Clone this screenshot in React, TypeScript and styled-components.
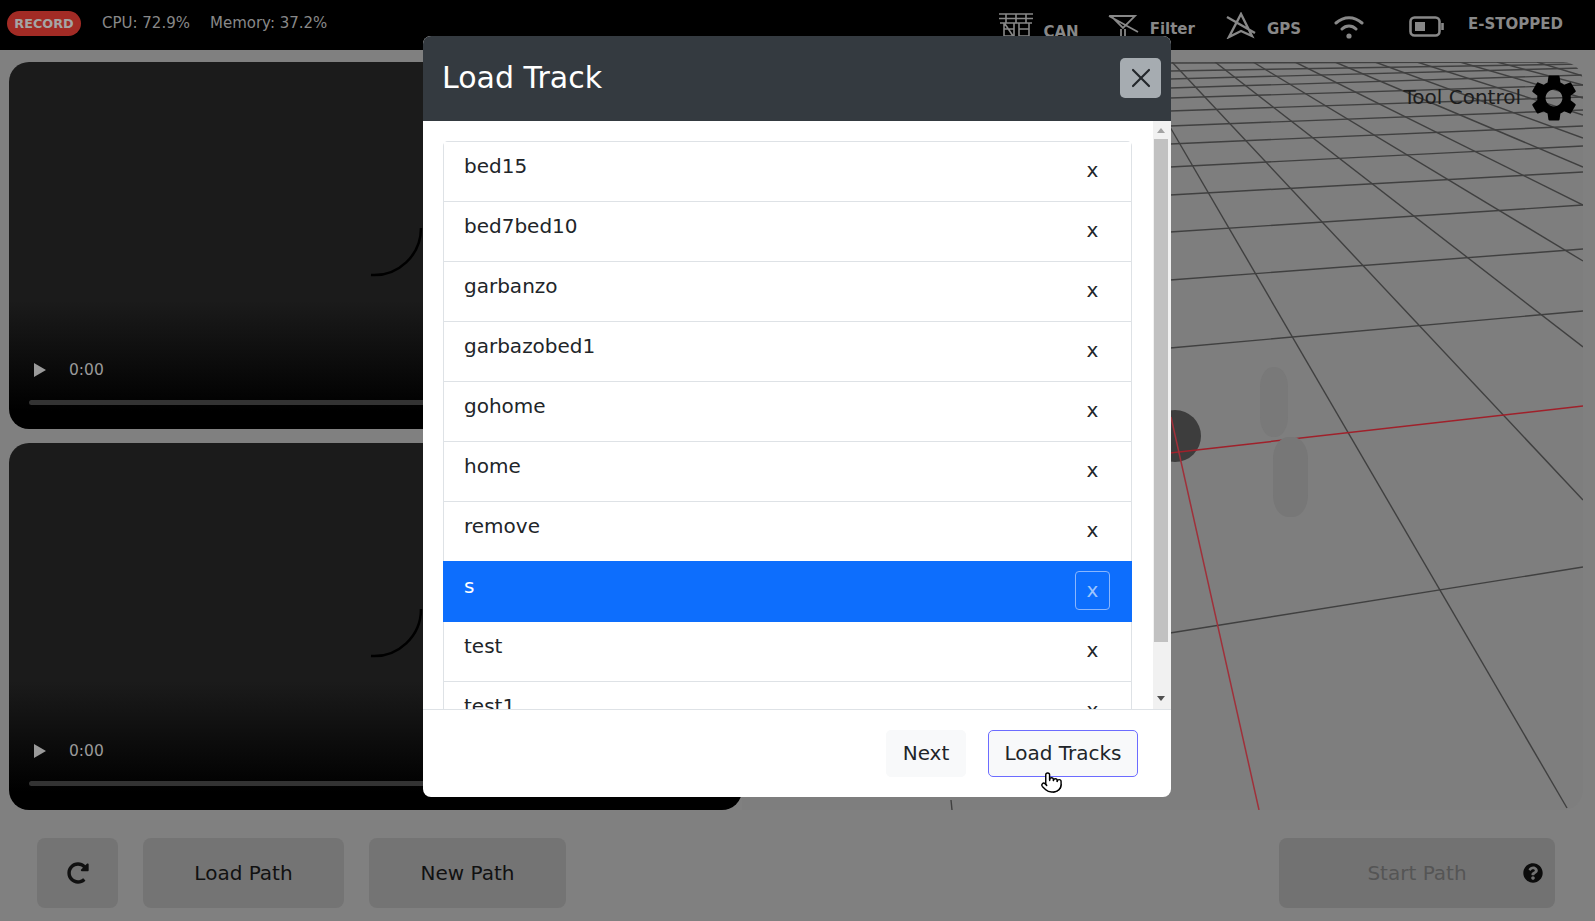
import styled, { createGlobalStyle } from 'styled-components';
import { MdSettings } from 'react-icons/md';
import { FaRedoAlt, FaQuestionCircle } from 'react-icons/fa';
import { X, Pointer } from 'lucide-react';

const GlobalStyle = createGlobalStyle`
  html, body {
    margin: 0;
    padding: 0;
    background: #808080;
    font-family: "DejaVu Sans", sans-serif;
  }
  * {
    box-sizing: border-box;
  }
`;

// Styled Components
const Page = styled.div`
  position: relative;
  width: 1595px;
  height: 921px;
  overflow: hidden;
  display: flex;
  flex-direction: column;
`;

const TopBar = styled.div`
  height: 50px;
  flex-shrink: 0;
  background: #000;
  display: flex;
  justify-content: space-between;
  align-items: center;
  padding: 0 32px 0 7px;
  color: #888;
`;

const TopGroup = styled.div`
  display: flex;
  align-items: center;
`;

const RecordPill = styled.div`
  width: 74px;
  height: 25px;
  margin: -3px 21px 0 0;
  border-radius: 13px;
  background: #a22b25;
  color: #a5a5a5;
  font-size: 12.8px;
  font-weight: 700;
  display: flex;
  align-items: center;
  justify-content: center;
`;

const Stat = styled.span<{ $gap: number }>`
  font-size: 15px;
  margin: -4px ${(p) => p.$gap}px 0 0;
`;

const StatusIcon = styled.svg<{ $gap: number; $w: number; $h: number; $top: number }>`
  width: ${(p) => p.$w}px;
  height: ${(p) => p.$h}px;
  margin: ${(p) => p.$top}px ${(p) => p.$gap}px 0 0;
  flex-shrink: 0;
  fill: none;
  stroke: #888;
`;

const StatusLabel = styled.span<{ $gap: number; $top: number }>`
  font-size: 15px;
  font-weight: 700;
  margin: ${(p) => p.$top}px ${(p) => p.$gap}px 0 0;
`;

const Main = styled.div`
  height: 760px;
  flex-shrink: 0;
  display: flex;
  padding: 12px 12px 0 9px;
`;

const VideoColumn = styled.div`
  width: 733px;
  flex-shrink: 0;
  display: flex;
  flex-direction: column;
  gap: 14px;
`;

const Video = styled.div`
  position: relative;
  height: 367px;
  border-radius: 20px;
  background: linear-gradient(#1b1b1b 0, #1b1b1b 65%, #000 95%);
`;

const Spinner = styled.svg`
  position: absolute;
  left: 350px;
  top: 150px;
  width: 70px;
  height: 70px;
  fill: none;
  stroke: #000;
  stroke-width: 2.5px;
`;

const VideoControls = styled.div`
  position: absolute;
  left: 25px;
  top: 299px;
  display: flex;
  align-items: center;
  gap: 23px;
  color: #9a9a9a;
  font-size: 15.5px;
`;

const PlayGlyph = styled.div`
  width: 0;
  height: 0;
  border-left: 12px solid #9a9a9a;
  border-top: 7px solid transparent;
  border-bottom: 7px solid transparent;
`;

const VideoTrack = styled.div`
  position: absolute;
  left: 20px;
  right: 20px;
  top: 338px;
  height: 5px;
  border-radius: 3px;
  background: #333;
`;

const Scene = styled.div`
  position: relative;
  flex: 1;
  height: 748px;
  border-radius: 0 20px 20px 0;
  overflow: hidden;
  background: #7e7e7e;
`;

const SceneDrawing = styled.svg`
  display: block;
  width: 841px;
  height: 748px;
`;

const ToolControl = styled.div`
  position: absolute;
  right: 1px;
  top: 8px;
  display: flex;
  align-items: center;
  gap: 5px;
  color: #1c1c1c;
`;

const ToolLabel = styled.span`
  font-size: 20px;
  margin-bottom: 2px;
`;

const BottomBar = styled.div`
  flex: 1;
  display: flex;
  align-items: flex-start;
  gap: 25px;
  padding: 28px 40px 0 37px;
`;

const ActionButton = styled.div<{ $w: number }>`
  width: ${(p) => p.$w}px;
  height: 70px;
  border-radius: 8px;
  background: #747474;
  color: #111;
  font-size: 20px;
  display: flex;
  align-items: center;
  justify-content: center;
`;

const StartButton = styled(ActionButton)`
  position: relative;
  margin-left: auto;
  background: #727272;
  color: #555;
`;

const HelpIcon = styled.div`
  position: absolute;
  right: 12px;
  top: 25px;
  display: flex;
  color: #0c0c0c;
`;

const Modal = styled.div`
  position: absolute;
  left: 423px;
  top: 36px;
  width: 748px;
  height: 761px;
  border-radius: 8px;
  overflow: hidden;
  background: #fff;
  display: flex;
  flex-direction: column;
`;

const ModalHeader = styled.div`
  height: 85px;
  flex-shrink: 0;
  background: #343a40;
  display: flex;
  align-items: center;
  justify-content: space-between;
  padding: 0 10px 2px 19px;
`;

const ModalTitle = styled.h2`
  margin: 0;
  font-size: 30px;
  font-weight: 400;
  color: #fff;
`;

const CloseButton = styled.button`
  width: 41px;
  height: 40px;
  padding: 0;
  border: 0;
  border-radius: 5px;
  background: #a6acb1;
  color: #23272b;
  display: flex;
  align-items: center;
  justify-content: center;
`;

const ModalBody = styled.div`
  height: 588px;
  flex-shrink: 0;
  display: flex;
`;

const ListViewport = styled.div`
  flex: 1;
  overflow: hidden;
  padding: 20px 21px 0 20px;
`;

const TrackList = styled.ul`
  list-style: none;
  margin: 0;
  padding: 0;
  border: 1px solid #dee2e6;
  border-bottom: 0;
  border-radius: 5px 5px 0 0;
`;

const TrackRow = styled.li<{ $active?: boolean }>`
  height: ${(p) => (p.$active ? 61 : 60)}px;
  margin: ${(p) => (p.$active ? '-1px -1px 0' : '0')};
  padding: ${(p) => (p.$active ? '10px 22px 0 21px' : '9px 21px 0 20px')};
  border-bottom: ${(p) => (p.$active ? '0' : '1px solid #dee2e6')};
  background: ${(p) => (p.$active ? '#0d6efd' : '#fff')};
  color: ${(p) => (p.$active ? '#fff' : '#212529')};
  display: flex;
  justify-content: space-between;
  font-size: 20px;
  line-height: 30px;
`;

const RemoveButton = styled.div<{ $active?: boolean }>`
  width: 35px;
  height: 39px;
  padding-bottom: 2px;
  border-radius: 4px;
  border: 1px solid ${(p) => (p.$active ? '#8ab6fe' : 'transparent')};
  color: ${(p) => (p.$active ? '#9ec5fe' : '#212529')};
  font-size: 20px;
  display: flex;
  align-items: center;
  justify-content: center;
`;

const ScrollTrack = styled.div`
  width: 18px;
  flex-shrink: 0;
  padding-right: 2px;
  background: #f1f1f1;
  display: flex;
  flex-direction: column;
  align-items: center;
`;

const ScrollUp = styled.div`
  width: 0;
  height: 0;
  margin: 7px 0 6px;
  border-left: 4px solid transparent;
  border-right: 4px solid transparent;
  border-bottom: 5px solid #a3a3a3;
`;

const ScrollThumb = styled.div`
  width: 14px;
  height: 503px;
  background: #c1c1c1;
`;

const ScrollDown = styled.div`
  width: 0;
  height: 0;
  margin-top: auto;
  margin-bottom: 8px;
  border-left: 4px solid transparent;
  border-right: 4px solid transparent;
  border-top: 5px solid #505050;
`;

const ModalFooter = styled.div`
  flex: 1;
  border-top: 1px solid #dee2e6;
  display: flex;
  justify-content: flex-end;
  align-items: flex-start;
  gap: 22px;
  padding: 20px 33px 0 0;
`;

const FooterButton = styled.button<{ $focused?: boolean }>`
  height: 47px;
  width: ${(p) => (p.$focused ? 150 : 80)}px;
  padding: 0 0 2px;
  border: 1px solid ${(p) => (p.$focused ? '#6c6cff' : '#f8f9fa')};
  border-radius: 5px;
  background: #f8f9fa;
  color: #212529;
  font-family: inherit;
  font-size: 20px;
`;

const Cursor = styled.div`
  position: absolute;
  left: 1040px;
  top: 771px;
  display: flex;
`;

const tracks = ['bed15', 'bed7bed10', 'garbanzo', 'garbazobed1', 'gohome', 'home', 'remove', 's', 'test', 'test1'];

// page coordinates of the floor grid, the svg viewBox is offset to match them
const crossLines = [
  [1170, 232, 1583, 205], [1170, 195, 1583, 172], [1170, 167, 1583, 146], [1170, 144, 1583, 126],
  [1170, 126, 1583, 110], [1170, 111, 1583, 97], [1170, 98, 1583, 85], [1170, 88, 1583, 75],
  [1170, 79, 1583, 68], [1170, 71, 1583, 64], [1170, 63, 1583, 62],
  [1170, 280, 1583, 249], [1170, 348, 1583, 311], [1170, 633, 1583, 567],
];

const depthLines = [
  [1172, 62, 1583, 500], [1170, 127, 1567, 808], [1215, 62, 1583, 347], [1253, 62, 1583, 261],
  [1295, 62, 1583, 205], [1335, 62, 1583, 167], [1375, 62, 1583, 138], [1417, 62, 1583, 115],
  [1460, 62, 1583, 98], [1497, 62, 1583, 85], [1537, 62, 1583, 76],
];

const App = () => {
  return (
    <Page>
      <GlobalStyle />
      <TopBar>
        <TopGroup>
          <RecordPill>RECORD</RecordPill>
          <Stat $gap={20}>CPU: 72.9%</Stat>
          <Stat $gap={0}>Memory: 37.2%</Stat>
        </TopGroup>
        <TopGroup>
          <StatusIcon $w={34} $h={26} $top={-1} $gap={10} viewBox="0 0 34 26" strokeWidth="1.6">
            <path d="M0 2h34M0 6.5h34M1 11h32M7 2v9M27 2v9M17 2v9M5 11v14M15 11v14M20 11v14M30 11v14M5 17h10M20 17h10M5 24h10M20 24h10M6 12l8 12" />
          </StatusIcon>
          <StatusLabel $gap={29} $top={14}>CAN</StatusLabel>
          <StatusIcon $w={31} $h={27} $top={2} $gap={11} viewBox="0 0 31 27" strokeWidth="1.8">
            <path d="M3 3h24L15 15zM13 16v8c0 2 4 2 4 0v-8M1 3l29 16" />
          </StatusIcon>
          <StatusLabel $gap={31} $top={7}>Filter</StatusLabel>
          <StatusIcon $w={30} $h={27} $top={0} $gap={11} viewBox="0 0 30 27" strokeWidth="2.4">
            <path d="M15 2l11 22-11-5L3 25zM1 5l28 16" />
          </StatusIcon>
          <StatusLabel $gap={33} $top={7}>GPS</StatusLabel>
          <StatusIcon $w={30} $h={24} $top={4} $gap={45} viewBox="0 0 30 24" strokeWidth="3" strokeLinecap="round">
            <path d="M2 8c8-7 18-7 26 0M8 14c4-4 10-4 14 0" />
            <circle cx="15" cy="21" r="2.6" fill="#888" stroke="none" />
          </StatusIcon>
          <StatusIcon $w={35} $h={21} $top={3} $gap={24} viewBox="0 0 35 21" strokeWidth="2.6">
            <rect x="1.5" y="1.5" width="29" height="18" rx="4" />
            <rect x="6" y="6" width="10" height="9" fill="#888" stroke="none" />
            <path d="M33.5 7v7" />
          </StatusIcon>
          <StatusLabel $gap={0} $top={-2}>E-STOPPED</StatusLabel>
        </TopGroup>
      </TopBar>

      <Main>
        <VideoColumn>
          {[0, 1].map((id) => (
            <Video key={id}>
              <Spinner viewBox="0 0 70 70">
                <path d="M62 16a47 47 0 0 1-50 47" />
              </Spinner>
              <VideoControls>
                <PlayGlyph />
                <span>0:00</span>
              </VideoControls>
              <VideoTrack />
            </Video>
          ))}
        </VideoColumn>
        <Scene>
          <SceneDrawing viewBox="742 62 841 748">
            {crossLines.map(([x1, y1, x2, y2], i) => (
              <line key={i} x1={x1} y1={y1} x2={x2} y2={y2} stroke="#404040" strokeWidth="1.4" />
            ))}
            {depthLines.map(([x1, y1, x2, y2], i) => (
              <line key={i} x1={x1} y1={y1} x2={x2} y2={y2} stroke="#404040" strokeWidth="1.4" />
            ))}
            <line x1="951" y1="800" x2="952" y2="810" stroke="#404040" strokeWidth="1.4" />
            <circle cx="1175" cy="436" r="26" fill="#3d3d3d" />
            <line x1="1170" y1="453" x2="1583" y2="406" stroke="#a0202a" strokeWidth="1.5" />
            <line x1="1171" y1="417" x2="1259" y2="810" stroke="#a0303a" strokeWidth="1.5" />
            <rect x="1260" y="367" width="28" height="70" rx="13" ry="20" fill="#797979" />
            <rect x="1273" y="437" width="35" height="80" rx="15" ry="22" fill="#777" />
          </SceneDrawing>
          <ToolControl>
            <ToolLabel>Tool Control</ToolLabel>
            <MdSettings size={56} color="#000" />
          </ToolControl>
        </Scene>
      </Main>

      <BottomBar>
        <ActionButton $w={81}>
          <FaRedoAlt size={22} color="#111" />
        </ActionButton>
        <ActionButton $w={201}>Load Path</ActionButton>
        <ActionButton $w={197}>New Path</ActionButton>
        <StartButton $w={276}>
          Start Path
          <HelpIcon>
            <FaQuestionCircle size={20} />
          </HelpIcon>
        </StartButton>
      </BottomBar>

      <Modal>
        <ModalHeader>
          <ModalTitle>Load Track</ModalTitle>
          <CloseButton>
            <X size={32} strokeWidth={1.6} />
          </CloseButton>
        </ModalHeader>
        <ModalBody>
          <ListViewport>
            <TrackList>
              {tracks.map((name) => (
                <TrackRow key={name} $active={name === 's'}>
                  {name}
                  <RemoveButton $active={name === 's'}>x</RemoveButton>
                </TrackRow>
              ))}
            </TrackList>
          </ListViewport>
          <ScrollTrack>
            <ScrollUp />
            <ScrollThumb />
            <ScrollDown />
          </ScrollTrack>
        </ModalBody>
        <ModalFooter>
          <FooterButton>Next</FooterButton>
          <FooterButton $focused>Load Tracks</FooterButton>
        </ModalFooter>
      </Modal>

      <Cursor>
        <Pointer size={23} color="#000" fill="#fff" strokeWidth={1.5} />
      </Cursor>
    </Page>
  );
};

export default App;
